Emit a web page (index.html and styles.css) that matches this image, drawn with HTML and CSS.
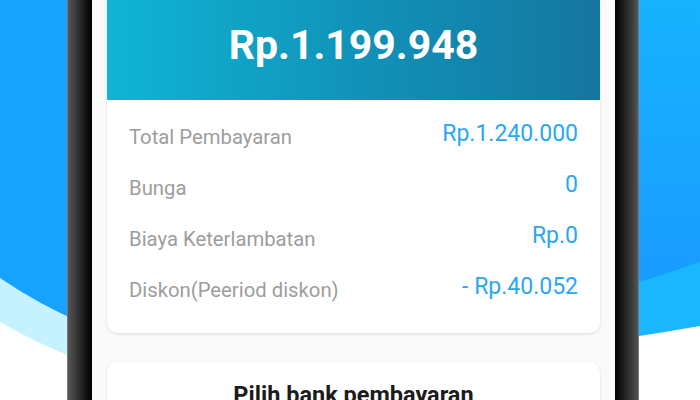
FILE: index.html
```html
<!DOCTYPE html>
<html lang="id">
<head>
<meta charset="utf-8">
<title>Pembayaran</title>
<link rel="stylesheet" href="styles.css">
</head>
<body>
<svg class="backdrop" width="700" height="400" viewBox="0 0 700 400" aria-hidden="true">
  <defs>
    <linearGradient id="rightBlue" x1="0" y1="0" x2="0" y2="1">
      <stop offset="0" stop-color="#17b3ff"/>
      <stop offset="1" stop-color="#199bff"/>
    </linearGradient>
  </defs>
  <rect x="0" y="0" width="700" height="400" fill="#ffffff"/>
  <!-- left side -->
  <path d="M0 0 H80 V360 Q40 345 0 322 Z" fill="#c6f1ff"/>
  <path d="M0 0 H80 V322 Q40 305 0 278 Z" fill="#16a2ff"/>
  <!-- right side -->
  <path d="M620 0 H700 V326 Q660 333 620 339 Z" fill="#1ab6ff"/>
  <path d="M620 0 H700 V262 Q660 276 620 288 Z" fill="url(#rightBlue)"/>
</svg>

<div class="phone">
  <div class="bezel bezel-left"></div>
  <main class="screen">
    <section class="card summary">
      <header class="amount-head">
        <div class="amount">Rp.1.199.948</div>
      </header>
      <div class="rows">
        <div class="row"><span class="label">Total Pembayaran</span><span class="value">Rp.1.240.000</span></div>
        <div class="row"><span class="label">Bunga</span><span class="value">0</span></div>
        <div class="row"><span class="label">Biaya Keterlambatan</span><span class="value">Rp.0</span></div>
        <div class="row"><span class="label">Diskon(Peeriod diskon)</span><span class="value">- Rp.40.052</span></div>
      </div>
    </section>
    <section class="card bank">
      <h2 class="bank-title">Pilih bank pembayaran</h2>
    </section>
  </main>
  <div class="bezel bezel-right"></div>
</div>
</body>
</html>
```

FILE: styles.css
```css
html, body {
  margin: 0;
  padding: 0;
}

body {
  width: 700px;
  height: 400px;
  overflow: hidden;
  position: relative;
  font-family: Roboto, "Noto Sans", "Liberation Sans", sans-serif;
  background: #ffffff;
}

.backdrop {
  position: absolute;
  left: 0;
  top: 0;
  z-index: 0;
}

.phone {
  position: relative;
  z-index: 1;
  margin-left: 67px;
  width: 572px;
  height: 400px;
  display: flex;
}

.bezel {
  width: 25px;
  flex: none;
}

.bezel-left {
  background: linear-gradient(to right, #9a9a9a 0, #555 1px, #3a3a3a 35%, #151515 75%, #000 100%);
}

.bezel-right {
  width: 24px;
  background: linear-gradient(to right, #000 0, #151515 25%, #3a3a3a 70%, #555 calc(100% - 1px), #9a9a9a 100%);
}

.screen {
  flex: 1;
  background: #fafafa;
  padding: 0 15px;
  display: flex;
  flex-direction: column;
}

.card {
  background: #ffffff;
  border-radius: 0 0 10px 10px;
  box-shadow: 0 1px 3px rgba(0, 0, 0, 0.12);
}

.summary {
  flex: none;
  overflow: hidden;
}

.amount-head {
  height: 100px;
  box-sizing: border-box;
  padding-top: 21px;
  background: linear-gradient(to right, #0fb5d5 0%, #1193b9 50%, #1576a0 100%);
  text-align: center;
}

.amount {
  color: #ffffff;
  font-weight: 700;
  font-size: 41px;
  line-height: 48px;
}

.rows {
  padding: 11.5px 22px 17.5px;
}

.row {
  height: 51px;
  display: flex;
  align-items: center;
  justify-content: space-between;
}

.label {
  font-size: 20.3px;
  line-height: 24px;
  color: #9d9d9d;
}

.value {
  font-size: 23px;
  line-height: 24px;
  padding-bottom: 7px;
  color: #2aa8f1;
}

.bank {
  flex: none;
  height: 60px;
  margin-top: 29px;
  border-radius: 10px 10px 0 0;
  padding-top: 18.5px;
  text-align: center;
}

.bank-title {
  margin: 0;
  font-size: 23.5px;
  line-height: 28px;
  font-weight: 700;
  color: #1c1c1c;
}
```
